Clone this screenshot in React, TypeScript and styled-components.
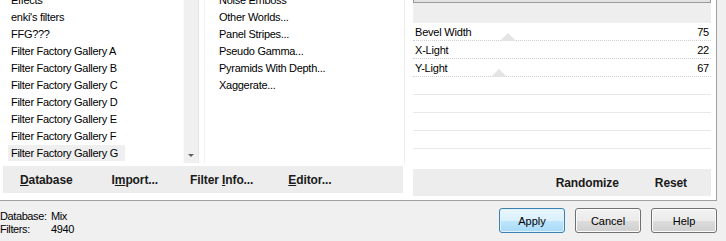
import React from 'react';
import styled, { createGlobalStyle } from 'styled-components';

const GlobalStyle = createGlobalStyle`
  html, body {
    margin: 0;
    padding: 0;
    background: #f0f0f0;
  }
  body {
    font-family: 'Liberation Sans', Arial, sans-serif;
    font-size: 11px;
    color: #000;
  }
`;

const categories = [
  'Effects',
  "enki's filters",
  'FFG???',
  'Filter Factory Gallery A',
  'Filter Factory Gallery B',
  'Filter Factory Gallery C',
  'Filter Factory Gallery D',
  'Filter Factory Gallery E',
  'Filter Factory Gallery F',
  'Filter Factory Gallery G',
  'Filter Factory Gallery H',
];

const filters = [
  'Noise Emboss',
  'Other Worlds...',
  'Panel Stripes...',
  'Pseudo Gamma...',
  'Pyramids With Depth...',
  'Xaggerate...',
];

// 슬라이더 값 (thumb 위치는 화면에서 보이는 대로)
const params = [
  { name: 'Bevel Width', value: 75, thumb: 87 },
  { name: 'X-Light', value: 22, thumb: null },
  { name: 'Y-Light', value: 67, thumb: 78 },
];

const EMPTY_ROWS = 5;

// 밑줄 친 단축키 글자
const Label: React.FC<{ text: string; hot: number }> = ({ text, hot }) => (
  <>
    {text.slice(0, hot)}
    <u>{text[hot]}</u>
    {text.slice(hot + 1)}
  </>
);

export default function App() {
  return (
    <Page>
      <GlobalStyle />
      <Frame>
        <LeftPane>
          <Lists>
            <CategoryList>
              {categories.map((c) => (
                <ListRow key={c}>
                  <ItemText $selected={c === 'Filter Factory Gallery G'}>{c}</ItemText>
                </ListRow>
              ))}
            </CategoryList>
            <ScrollBar>
              <ArrowDown />
            </ScrollBar>
            <FilterList>
              {filters.map((f) => (
                <ListRow key={f}>
                  <ItemText>{f}</ItemText>
                </ListRow>
              ))}
            </FilterList>
          </Lists>
          <Toolbar>
            <ToolButton $gap={17}>
              <Label text="Database" hot={0} />
            </ToolButton>
            <ToolButton $gap={39}>
              <Label text="Import..." hot={1} />
            </ToolButton>
            <ToolButton $gap={32}>
              <Label text="Filter Info..." hot={7} />
            </ToolButton>
            <ToolButton $gap={35}>
              <Label text="Editor..." hot={0} />
            </ToolButton>
          </Toolbar>
        </LeftPane>

        <RightPane>
          <TopBox />
          <Band />
          <Rows>
            {params.map((p) => (
              <ParamRow key={p.name} $solid>
                <span>{p.name}</span>
                {p.thumb !== null && (
                  <Thumb style={{ left: p.thumb }} width="16" height="8" viewBox="0 0 16 8">
                    <path d="M8 0 L16 8 L0 8 Z" fill="#e4e4e4" />
                  </Thumb>
                )}
                <span>{p.value}</span>
              </ParamRow>
            ))}
            {Array.from({ length: EMPTY_ROWS }).map((_, i) => (
              <ParamRow key={i} $last={i === EMPTY_ROWS - 1} />
            ))}
          </Rows>
          <Toolbar $right>
            <ToolButton>Randomize</ToolButton>
            <ToolButton $gap={36} style={{ marginRight: 24 }}>Reset</ToolButton>
          </Toolbar>
        </RightPane>
      </Frame>

      <Footer>
        <Info>
          <span>Database:</span>
          <span>Mix</span>
          <span>Filters:</span>
          <span>4940</span>
        </Info>
        <Buttons>
          <DialogButton $default>Apply</DialogButton>
          <DialogButton>Cancel</DialogButton>
          <DialogButton>Help</DialogButton>
        </Buttons>
      </Footer>
    </Page>
  );
}

const Page = styled.div`
  width: 726px;
  height: 241px;
  overflow: hidden;
  background: #f0f0f0;
`;

const Frame = styled.div`
  width: 716px;
  height: 200px;
  display: flex;
  background: #fff;
  border-right: 1px solid #a0a0a0;
  border-bottom: 1px solid #a0a0a0;
`;

const LeftPane = styled.div`
  width: 407px;
  display: flex;
  flex-direction: column;
`;

const Lists = styled.div`
  height: 163px;
  display: flex;
  overflow: hidden;
`;

const CategoryList = styled.div`
  width: 183px;
  padding-left: 8px;
  margin-top: -9px;
  box-sizing: border-box;
`;

const ListRow = styled.div`
  height: 17px;
  display: flex;
  align-items: center;
  white-space: nowrap;
`;

const ItemText = styled.span<{ $selected?: boolean }>`
  padding: 2px 7px 2px 3px;
  letter-spacing: -0.28px;
  background: ${(p) => (p.$selected ? '#efefef' : 'transparent')};
`;

const ScrollBar = styled.div`
  width: 16px;
  background: #f0f0f0;
  border-left: 1px solid #fafafa;
  border-right: 1px solid #e6e6e6;
  display: flex;
  flex-direction: column;
  justify-content: flex-end;
  align-items: center;
  padding-bottom: 6px;
  box-sizing: border-box;
`;

const ArrowDown = styled.div`
  width: 0;
  height: 0;
  border-left: 3px solid transparent;
  border-right: 3px solid transparent;
  border-top: 3px solid #606060;
`;

const FilterList = styled.div`
  flex: 1;
  margin-left: 5px;
  margin-right: 2px;
  margin-top: -9px;
  padding-left: 11px;
  border-left: 1px solid #f2f2f2;
  border-right: 1px solid #ececec;
`;

const Toolbar = styled.div<{ $right?: boolean }>`
  height: 27px;
  margin: 3px ${(p) => (p.$right ? '0' : '4px')} 0 ${(p) => (p.$right ? '0' : '3px')};
  background: #ededed;
  display: flex;
  align-items: center;
  justify-content: ${(p) => (p.$right ? 'flex-end' : 'flex-start')};
`;

const ToolButton = styled.span<{ $gap?: number }>`
  margin-left: ${(p) => p.$gap ?? 0}px;
  font-size: 12px;
  font-weight: bold;
  letter-spacing: -0.1px;
  color: #1a1a1a;
  white-space: nowrap;
`;

const RightPane = styled.div`
  width: 298px;
  margin-left: 6px;
  display: flex;
  flex-direction: column;
`;

const TopBox = styled.div`
  height: 2px;
  background: #e2e2e2;
  border: 1px solid #9a9a9a;
  border-top: none;
`;

const Band = styled.div`
  height: 20px;
  background: #eeeeee;
`;

const Rows = styled.div`
  height: 143px;
  overflow: hidden;
`;

const ParamRow = styled.div<{ $solid?: boolean; $last?: boolean }>`
  position: relative;
  height: 17px;
  display: flex;
  align-items: center;
  justify-content: space-between;
  padding: 0 2px;
  border-bottom: 1px ${(p) => (p.$solid ? 'dotted #cfcfcf' : 'solid #e8e8e8')};
  ${(p) => (p.$last ? 'border-bottom: none;' : '')}
  letter-spacing: -0.2px;
`;

const Thumb = styled.svg`
  position: absolute;
  bottom: -1px;
`;

const Footer = styled.div`
  height: 40px;
  display: flex;
  justify-content: space-between;
  padding-right: 9px;
`;

const Info = styled.div`
  display: grid;
  grid-template-columns: 51px auto;
  grid-auto-rows: 13px;
  align-content: start;
  padding-top: 9px;
  letter-spacing: -0.4px;
`;

const Buttons = styled.div`
  display: flex;
  gap: 10px;
  padding-top: 7px;
`;

const DialogButton = styled.button<{ $default?: boolean }>`
  width: 66px;
  height: 25px;
  font-family: 'Liberation Sans', Arial, sans-serif;
  font-size: 11px;
  color: #000;
  border-radius: 3px;
  border: 1px solid ${(p) => (p.$default ? '#3c7fb1' : '#707070')};
  background: ${(p) =>
    p.$default
      ? 'linear-gradient(#eaf6fd 0%, #d9f0fc 50%, #bee6fd 51%, #a7d9f5 100%)'
      : 'linear-gradient(#f2f2f2 0%, #ebebeb 50%, #dddddd 51%, #cfcfcf 100%)'};
  box-shadow: inset 0 0 0 1px ${(p) => (p.$default ? '#e0f2fb' : '#fcfcfc')};
  padding: 0;
`;
